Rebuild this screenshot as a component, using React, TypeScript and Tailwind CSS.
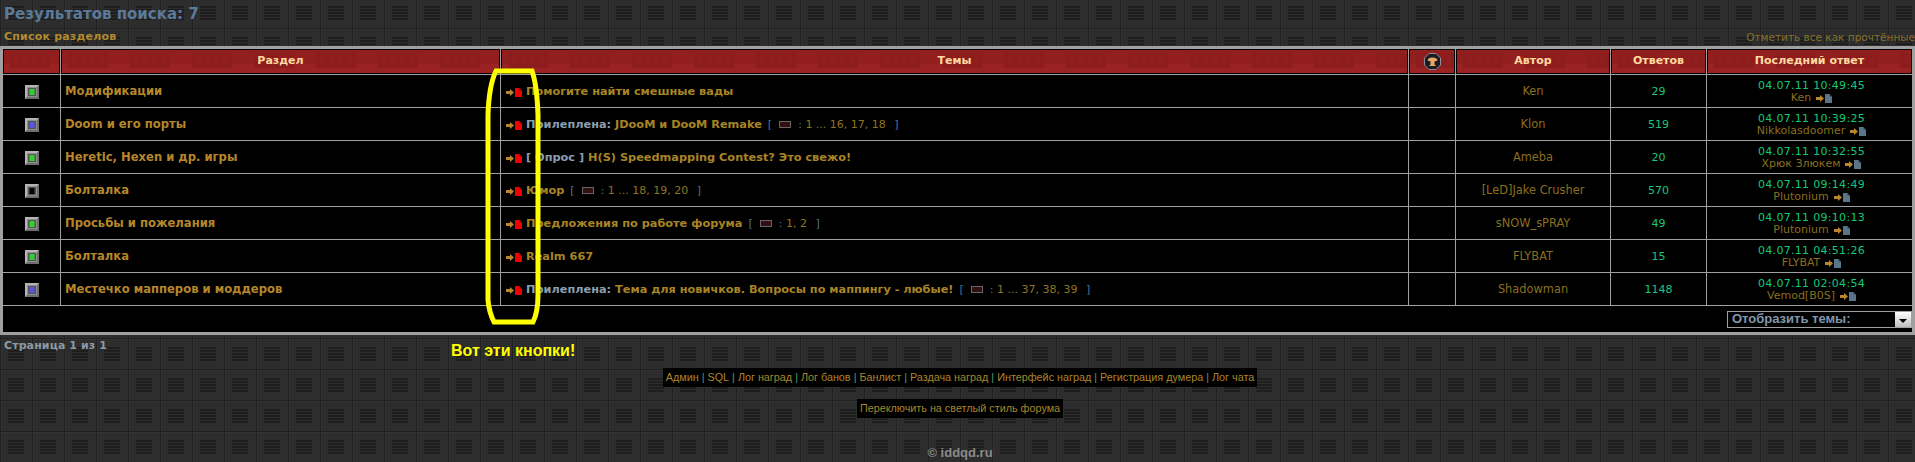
// Forum search results page (dark style)
import type { ReactNode } from 'react'

type Topic = {
  forum: string
  led: 'green' | 'blue' | 'black'
  prefix?: string
  title: string
  pages?: string
  author: string
  replies: string
  time: string
  last: string
}

const topics: Topic[] = [
  { forum: 'Модификации', led: 'green', title: 'Помогите найти смешные вады', author: 'Ken', replies: '29', time: '04.07.11 10:49:45', last: 'Ken' },
  { forum: 'Doom и его порты', led: 'blue', prefix: 'Прилеплена:', title: 'JDooM и DooM Remake', pages: '1 ... 16, 17, 18', author: 'Klon', replies: '519', time: '04.07.11 10:39:25', last: 'Nikkolasdoomer' },
  { forum: 'Heretic, Hexen и др. игры', led: 'green', prefix: '[ Опрос ]', title: 'H(S) Speedmapping Contest? Это свежо!', author: 'Ameba', replies: '20', time: '04.07.11 10:32:55', last: 'Хрюк Злюкем' },
  { forum: 'Болталка', led: 'black', title: 'Юмор', pages: '1 ... 18, 19, 20', author: '[LeD]Jake Crusher', replies: '570', time: '04.07.11 09:14:49', last: 'Plutonium' },
  { forum: 'Просьбы и пожелания', led: 'green', title: 'Предложения по работе форума', pages: '1, 2', author: 'sNOW_sPRAY', replies: '49', time: '04.07.11 09:10:13', last: 'Plutonium' },
  { forum: 'Болталка', led: 'green', title: 'Realm 667', author: 'FLYBAT', replies: '15', time: '04.07.11 04:51:26', last: 'FLYBAT' },
  { forum: 'Местечко мапперов и моддеров', led: 'blue', prefix: 'Прилеплена:', title: 'Тема для новичков. Вопросы по маппингу - любые!', pages: '1 ... 37, 38, 39', author: 'Shadowman', replies: '1148', time: '04.07.11 02:04:54', last: 'Vemod[B0S]' },
]

const footerLinks = ['Админ', 'SQL', 'Лог наград', 'Лог банов', 'Банлист', 'Раздача наград', 'Интерфейс наград', 'Регистрация думера', 'Лог чата']

function Arrow() {
  return (
    <svg width="8" height="7" viewBox="0 0 8 7" className="shrink-0">
      <path d="M0 2h4V0l4 3.500L4 7V5H0z" fill="#b8862c" />
    </svg>
  )
}

function Doc({ color }: { color: string }) {
  return (
    <svg width="7" height="9" viewBox="0 0 7 9" className="ml-px shrink-0">
      <path d="M0 0h4.500L7 2.500V9H0z" fill={color} />
      <path d="M4.500 0v2.500H7z" fill="#00000066" />
    </svg>
  )
}

function Led({ kind }: { kind: Topic['led'] }) {
  const fill = kind === 'green' ? '#2fd02f' : kind === 'blue' ? '#5a55e0' : '#050505'
  return (
    <svg width="14" height="14" viewBox="0 0 14 14" className="mx-auto block">
      <rect width="14" height="14" fill="#8e8e8e" />
      <path d="M0 0h14l-2 2H2v10l-2 2z" fill="#b5b5b5" />
      <path d="M14 14H0l2-2h10V2l2-2z" fill="#6e6e6e" />
      <rect x="3" y="3" width="8" height="8" fill="#555555" />
      <rect x="4.500" y="4" width="5" height="6" fill={fill} />
    </svg>
  )
}

function Nuke() {
  return (
    <svg width="17" height="17" viewBox="0 0 17 17" className="mx-auto block">
      <path d="M5 0.500h7L16.500 5v7L12 16.500H5L0.500 12V5z" fill="#1c1c24" stroke="#8a8f9a" />
      <path d="M3.500 7.500Q4 4.500 8.500 4.500T13.500 7.500L10.500 8.500V11.500L12 13H5L6.500 11.500V8.500z" fill="#e8a860" />
    </svg>
  )
}

function Th({ children }: { children?: ReactNode }) {
  return (
    <th className="h-[25px] border border-black p-0 text-center align-middle text-[11px] font-bold text-[#ffd9a0] bg-[#921d1d] bg-[url('data:image/svg+xml,%3Csvg%20xmlns=%22http://www.w3.org/2000/svg%22%20width=%2262%22%20height=%2223%22%3E%3Crect%20width=%2262%22%20height=%2223%22%20fill=%22%23931e1e%22/%3E%3Crect%20y=%2214%22%20width=%2262%22%20height=%229%22%20fill=%22%239a2222%22/%3E%3Cpath%20d=%22M6%203h40v15H6z%22%20fill=%22%238d1c1c%22/%3E%3Cpath%20d=%22M10%207h5v7h-5zM19%207h5v7h-5zM28%207h5v7h-5zM37%207h5v7h-5z%22%20fill=%22%23911e1e%22/%3E%3C/svg%3E')]">
      {children}
    </th>
  )
}

function Pages({ pages }: { pages: string }) {
  return (
    <span className="ml-[6px] font-normal text-[11px] text-[#8f7420]">
      <span className="text-[#4f7396]">[</span>
      <span className="mx-[7px] inline-block h-[7px] w-[12px] border border-[#666] bg-[#301010] align-[0px]" />
      <span className="text-[#4f7396]">:</span> {pages} <span className="ml-[5px] text-[#4f7396]">]</span>
    </span>
  )
}

export default function App() {
  return (
    <div className="relative min-h-[462px] font-['DejaVu_Sans',sans-serif] bg-[#2d2d2d] bg-[position:0_-3px] bg-[url('data:image/svg+xml,%3Csvg%20xmlns=%22http://www.w3.org/2000/svg%22%20width=%2232%22%20height=%2231%22%3E%3Crect%20width=%2232%22%20height=%2231%22%20fill=%22%232d2d2d%22/%3E%3Cpath%20d=%22M0%200h32v1H0zM0%200h1v31H0z%22%20fill=%22%23202020%22/%3E%3Cpath%20d=%22M1%201h31v1H1zM1%201h1v30H1z%22%20fill=%22%23333333%22/%3E%3Cpath%20d=%22M8%209h16v2H8zM8%2012h16v2H8zM8%2015h16v2H8zM8%2018h16v2H8zM8%2021h16v2H8z%22%20fill=%22%231e1e1e%22/%3E%3C/svg%3E')]">
      <div className="h-[46px] px-[4px]">
        <div className="h-[28px] pt-[4px] text-[15px] leading-[20px] font-bold text-[#5b7a99]">Результатов поиска: 7</div>
        <div className="flex h-[19px] items-center justify-between text-[11px]">
          <span className="font-bold tracking-[0.2px] text-[#b08a30]">Список разделов</span>
          <span className="-mr-[4px] text-[10.5px] text-[#85712c]">Отметить все как прочтённые</span>
        </div>
      </div>

      <div className="border-2 border-[#a0a0a0]">
        <table className="w-[1911px] table-fixed border-separate border-spacing-[1px] bg-[#a0a0a0]">
          <colgroup>
            <col className="w-[57px]" />
            <col className="w-[439px]" />
            <col className="w-[907px]" />
            <col className="w-[46px]" />
            <col className="w-[154px]" />
            <col className="w-[95px]" />
            <col className="w-[205px]" />
          </colgroup>
          <thead>
            <tr>
              <Th />
              <Th>Раздел</Th>
              <Th>Темы</Th>
              <Th><Nuke /></Th>
              <Th>Автор</Th>
              <Th>Ответов</Th>
              <Th>Последний ответ</Th>
            </tr>
          </thead>
          <tbody>
            {topics.map((t) => (
              <tr key={t.time} className="h-[32px] text-[11px]">
                <td className="bg-black p-0 pt-[2px] align-middle"><Led kind={t.led} /></td>
                <td className="bg-black py-0 pt-[2px] pl-[4px] align-middle text-[11.6px] font-bold text-[#b5872a]">{t.forum}</td>
                <td className="bg-black py-0 pt-[2px] pl-[5px] align-middle">
                  <div className="flex items-center">
                    <Arrow />
                    <Doc color="#f00000" />
                    <span className="ml-[4px] text-[11.3px] font-bold whitespace-nowrap text-[#a88425]">
                      {t.prefix && <span className="text-[#8a9fb0]">{t.prefix} </span>}
                      {t.title}
                      {t.pages && <Pages pages={t.pages} />}
                    </span>
                  </div>
                </td>
                <td className="bg-black p-0" />
                <td className="bg-black p-0 pt-[2px] text-center align-middle text-[11.4px] text-[#8a6f1e]">{t.author}</td>
                <td className="bg-black p-0 pt-[2px] text-center align-middle text-[#1cc47e]">{t.replies}</td>
                <td className="bg-black p-0 pt-[2px] pl-[4px] text-center align-middle leading-[12px]">
                  <div className="tracking-[0.3px] text-[#12c878]">{t.time}</div>
                  <div className="flex items-center justify-center gap-[5px] text-[#8a6f1e]">
                    {t.last}
                    <span className="flex items-center"><Arrow /><Doc color="#5a7488" /></span>
                  </div>
                </td>
              </tr>
            ))}
            <tr>
              <td colSpan={7} className="h-[26px] bg-black p-0 align-middle">
                <div className="flex justify-end">
                  <div className="flex h-[17px] w-[185px] items-center justify-between border border-[#a0a0a0] bg-black pl-[4px] font-['Liberation_Sans',sans-serif] text-[13px] font-bold text-[#8096aa]">
                    <span>Отобразить темы:</span>
                    <span className="flex h-[15px] w-[16px] items-center justify-center bg-[linear-gradient(#ffffff,#bdbdbd)]">
                      <span className="mt-[3px] border-x-[4px] border-t-[4px] border-x-transparent border-t-black" />
                    </span>
                  </div>
                </div>
              </td>
            </tr>
          </tbody>
        </table>
      </div>

      <div className="px-[4px] pt-[4px] text-[11px] leading-[14px] font-bold tracking-[0.1px] text-[#8b9aa5]">Страница 1 из 1</div>

      <div className="mt-[15px] flex flex-col items-center pl-[5px] font-['Liberation_Sans',sans-serif] text-[10.8px] text-[#a8862a]">
        <div className="flex h-[19px] items-center bg-black px-[3px] whitespace-nowrap">
          {footerLinks.map((link, i) => (
            <span key={link}>
              {i > 0 && <span className="mx-[3px] text-[#4fa070]">|</span>}
              {link}
            </span>
          ))}
        </div>
        <div className="mt-[12px] flex h-[19px] items-center bg-black px-[3px]">Переключить на светлый стиль форума</div>
        <div className="mt-[25px] text-[13px] font-bold text-[#8a8a8a]">© iddqd.ru</div>
      </div>

      {/* пометка поверх скриншота */}
      <svg className="absolute left-[480px] top-[60px]" width="70" height="270" viewBox="480 60 70 270" fill="none">
        <path d="M488 300L488 115Q489 85 496 71L532 71Q537 85 538 115L538 295Q538 312 533 322L494 322Q489 312 488 300Z" stroke="#ffff00" strokeWidth="5" />
      </svg>
      <div className="absolute left-[451px] top-[339px] font-['Liberation_Sans',sans-serif] text-[16px] font-bold text-[#ffff00]">Вот эти кнопки!</div>
    </div>
  )
}
